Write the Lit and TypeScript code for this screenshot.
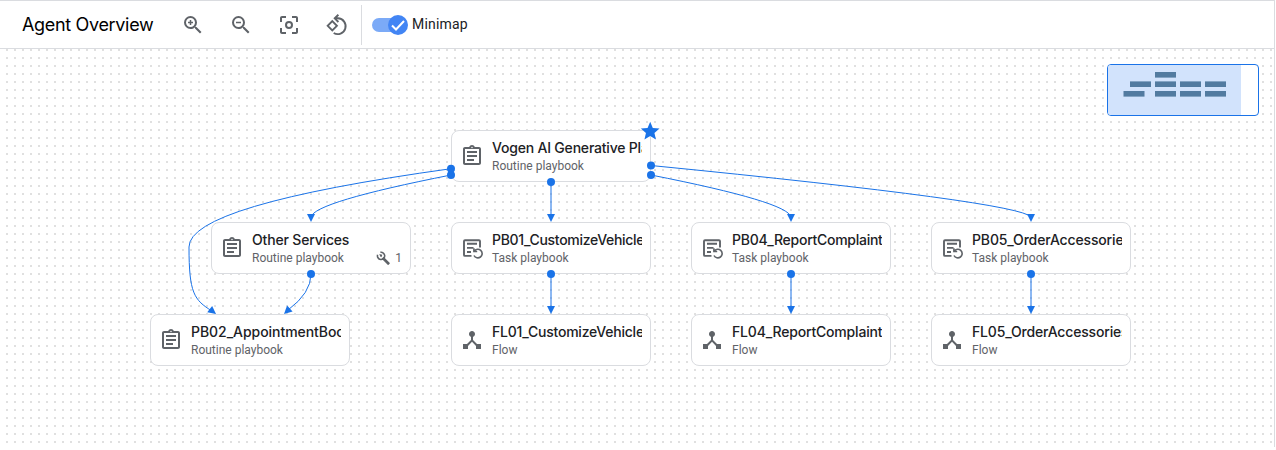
import { LitElement, html, svg, css } from "lit";
import { customElement, property } from "lit/decorators.js";

type Kind = "routine" | "task" | "flow";
interface GraphNode {
  x: number;
  y: number;
  title: string;
  kind: Kind;
  tracking: number;
  start?: boolean;
  tools?: number;
}

const SUBTITLES: Record<Kind, string> = {
  routine: "Routine playbook",
  task: "Task playbook",
  flow: "Flow",
};

const NODES: GraphNode[] = [
  { x: 451, y: 81, title: "Vogen AI Generative Playbook", kind: "routine", tracking: -0.2, start: true },
  { x: 211, y: 173, title: "Other Services", kind: "routine", tracking: -0.17, tools: 1 },
  { x: 451, y: 173, title: "PB01_CustomizeVehicle", kind: "task", tracking: -0.3 },
  { x: 691, y: 173, title: "PB04_ReportComplaint", kind: "task", tracking: -0.27 },
  { x: 931, y: 173, title: "PB05_OrderAccessories", kind: "task", tracking: -0.15 },
  { x: 150, y: 265, title: "PB02_AppointmentBooking", kind: "routine", tracking: -0.05 },
  { x: 451, y: 265, title: "FL01_CustomizeVehicle", kind: "flow", tracking: -0.22 },
  { x: 691, y: 265, title: "FL04_ReportComplaint", kind: "flow", tracking: -0.18 },
  { x: 931, y: 265, title: "FL05_OrderAccessories", kind: "flow", tracking: -0.17 },
];

// Canvas coordinates: path, source port and arrow tip with its rotation.
const EDGES = [
  { d: "M451 119.7Q189 156 189 198C189 244 194 251 212 262", from: [451, 119.7], to: [216, 265], turn: -52 },
  { d: "M451 126Q314 153 311 168", from: [451, 126], to: [311, 173], turn: 0 },
  { d: "M551 133V168", from: [551, 133], to: [551, 173], turn: 0 },
  { d: "M651 126Q788 153 791 168", from: [651, 126], to: [791, 173], turn: 0 },
  { d: "M651 116.5Q1020 153 1031 168", from: [651, 116.5], to: [1031, 173], turn: 0 },
  { d: "M311 225Q311 244 288 261", from: [311, 225], to: [284, 265], turn: 47 },
  { d: "M551 225V260", from: [551, 225], to: [551, 265], turn: 0 },
  { d: "M791 225V260", from: [791, 225], to: [791, 265], turn: 0 },
  { d: "M1031 225V260", from: [1031, 225], to: [1031, 265], turn: 0 },
];

const MAP_BLOCKS = [
  [47, 7], [22, 16.4], [47, 16.4], [72, 16.4], [97, 16.4],
  [15.5, 26], [47, 26], [72, 26], [97, 26],
];

const ICONS = {
  routine: svg`<path d="M7 15h7v2H7zm0-4h10v2H7zm0-4h10v2H7zm12-4h-4.18C14.4 1.84 13.3 1 12 1s-2.4.84-2.82 2H5c-1.1 0-2 .9-2 2v14c0 1.1.9 2 2 2h14c1.1 0 2-.9 2-2V5c0-1.1-.9-2-2-2zm-7-.25c.41 0 .75.34.75.75s-.34.75-.75.75-.75-.34-.75-.75.34-.75.75-.75zM19 19H5V5h14v14z"/>`,
  task: svg`<g fill="none" stroke="currentColor" stroke-width="1.9"><path d="M11.5 19.9H5a1 1 0 0 1-1-1V5.2a1 1 0 0 1 1-1h14a1 1 0 0 1 1 1v6.3M7 7.8h10M7 11.9h6.5M7 16h4"/><path stroke-width="1.6" d="M13.9 12.2v3.3h3.3M14.2 15.3a4.3 4.3 0 1 1-.2 4.2"/></g>`,
  flow: svg`<path d="M17 16l-4-4V8.82C14.16 8.4 15 7.3 15 6c0-1.66-1.34-3-3-3S9 4.34 9 6c0 1.3.84 2.4 2 2.82V12l-4 4H3v5h5v-3.05l4-4.2 4 4.2V21h5v-5h-4z"/>`,
  zoomIn: svg`<path d="M15.5 14h-.79l-.28-.27A6.47 6.47 0 0 0 16 9.5 6.5 6.5 0 1 0 9.5 16c1.61 0 3.09-.59 4.23-1.57l.27.28v.79l5 4.99L20.49 19l-4.99-5zm-6 0C7.01 14 5 11.99 5 9.5S7.01 5 9.5 5 14 7.01 14 9.5 11.99 14 9.5 14zm.75-7h-1.5v1.75H7v1.5h1.75V12h1.5v-1.75H12v-1.5h-1.75z"/>`,
  zoomOut: svg`<path d="M15.5 14h-.79l-.28-.27A6.47 6.47 0 0 0 16 9.5 6.5 6.5 0 1 0 9.5 16c1.61 0 3.09-.59 4.23-1.57l.27.28v.79l5 4.99L20.49 19l-4.99-5zm-6 0C7.01 14 5 11.99 5 9.5S7.01 5 9.5 5 14 7.01 14 9.5 11.99 14 9.5 14zM7 8.75h5v1.5H7z"/>`,
  center: svg`<path d="M5 15H3v4c0 1.1.9 2 2 2h4v-2H5v-4zM5 5h4V3H5c-1.1 0-2 .9-2 2v4h2V5zm14-2h-4v2h4v4h2V5c0-1.1-.9-2-2-2zm0 16h-4v2h4c1.1 0 2-.9 2-2v-4h-2v4z"/><circle cx="12" cy="12" r="3" fill="none" stroke="currentColor" stroke-width="2"/>`,
  reset: svg`<g fill="none" stroke="currentColor" stroke-width="1.9"><path d="M7.3 8.2l4.6 4.6-4.6 4.6-4.6-4.6z"/><path d="M13.4 1.7L9.7 5.3l3.7 3.7M10 5.3h3a7.9 7.9 0 1 1-4.3 14.7"/></g>`,
  wrench: svg`<path fill="none" stroke="currentColor" stroke-width="2.6" d="M2.7 6.2A6 6 0 1 0 7.2 2.2"/><path d="M5.500 5l5 1.200-1.500 4-2-1zM12.500 9.500L22.500 19.500c.5.500.5 1 0 1.500l-1.700 1.700c-.5.500-1 .5-1.500 0L9.500 13z"/>`,
  star: svg`<path d="M12 17.27L18.18 21l-1.64-7.03L22 9.24l-7.19-.61L12 2 9.19 8.63 2 9.24l5.46 4.73L5.82 21z"/>`,
};

@customElement("ui-icon")
class UiIcon extends LitElement {
  @property() name: keyof typeof ICONS = "routine";
  static styles = css`
    :host { display: block; width: 24px; height: 24px; flex: none; }
    .glyph { display: block; width: 100%; height: 100%; fill: currentColor; }
  `;
  render() {
    return html`<svg class="glyph" viewBox="0 0 24 24">${ICONS[this.name]}</svg>`;
  }
}

@customElement("graph-card")
class GraphCard extends LitElement {
  @property({ attribute: false }) node!: GraphNode;
  static styles = css`
    :host { display: block; position: absolute; width: 200px; height: 52px; }
    .card {
      box-sizing: border-box; height: 100%; display: flex; align-items: center; gap: 8px;
      padding: 0 8px; background: #fff; border: 1px solid #dadce0; border-radius: 8px;
      color: #5f6368; font: 12px/16px Roboto, sans-serif;
    }
    .body { flex: 1; min-width: 0; height: 36px; }
    .title {
      overflow: hidden; white-space: nowrap; height: 20px;
      font: 500 14px/20px "Google Sans", Inter, sans-serif; color: #202124;
    }
    .row { display: flex; justify-content: space-between; height: 16px; }
    .tools { display: flex; align-items: center; gap: 5px; }
    .wrench { width: 14.5px; height: 14.5px; }
    .star { position: absolute; left: 188px; top: -10px; width: 22.4px; height: 22.4px; color: #1a73e8; }
  `;
  render() {
    const n = this.node;
    return html`
      <div class="card">
        <ui-icon name=${n.kind}></ui-icon>
        <div class="body">
          <div class="title" style="letter-spacing:${n.tracking}px">${n.title}</div>
          <div class="row">
            <span>${SUBTITLES[n.kind]}</span>
            ${n.tools ? html`<span class="tools"><ui-icon class="wrench" name="wrench"></ui-icon>${n.tools}</span>` : ""}
          </div>
        </div>
      </div>
      ${n.start ? html`<ui-icon class="star" name="star"></ui-icon>` : ""}
    `;
  }
}

@customElement("app-root")
class AppRoot extends LitElement {
  static styles = css`
    :host { display: block; width: 1276px; height: 450px; background: #fff; overflow: hidden; font-family: Roboto, sans-serif; }
    .panel { box-sizing: border-box; width: 1275px; height: 447px; display: flex; flex-direction: column; border-top: 1px solid #dadce0; border-right: 1px solid #dadce0; }
    .bar { box-sizing: border-box; height: 48px; flex: none; display: flex; align-items: center; border-bottom: 1px solid #dadce0; padding-left: 22px; color: #5f6368; }
    .heading { width: 159px; font: 400 18px/24px "Google Sans", Inter, sans-serif; letter-spacing: -0.33px; color: #000; white-space: nowrap; }
    .actions { display: flex; gap: 24px; }
    .rule { width: 1px; height: 40px; margin: 0 10px 0 12px; background: #dadce0; }
    .switch { width: 36px; height: 20px; flex: none; }
    .label { margin-left: 4px; padding-bottom: 2px; font-size: 14px; line-height: 20px; letter-spacing: 0.2px; color: #202124; }
    .canvas {
      position: relative; flex: 1; overflow: hidden;
      background: conic-gradient(from 270deg at 2px 2px, #e0e0e0 90deg, transparent 0) 6px 0 / 8px 8px;
    }
    .edges { position: absolute; inset: 0; width: 100%; height: 100%; overflow: visible; pointer-events: none; }
    .line { fill: none; stroke: #1a73e8; stroke-width: 1; }
    .mark { fill: #1a73e8; }
    .minimap { position: absolute; left: 1107px; top: 15px; width: 152px; height: 52px; box-sizing: border-box; border: 1px solid #1a73e8; border-radius: 4px; background: #fff; overflow: hidden; }
    .map { display: block; width: 150px; height: 50px; }
  `;
  render() {
    return html`
      <div class="panel">
        <div class="bar">
          <div class="heading">Agent Overview</div>
          <div class="actions">
            <ui-icon name="zoomIn"></ui-icon>
            <ui-icon name="zoomOut"></ui-icon>
            <ui-icon name="center"></ui-icon>
            <ui-icon name="reset"></ui-icon>
          </div>
          <div class="rule"></div>
          <svg class="switch" viewBox="0 0 36 20">
            <rect y="3" width="32" height="14" rx="7" fill="#7baaf7" />
            <circle cx="26" cy="10" r="10" fill="#4285f4" />
            <path d="M20 10.5l4 4 8-8.5" fill="none" stroke="#fff" stroke-width="2" />
          </svg>
          <span class="label">Minimap</span>
        </div>
        <div class="canvas">
          ${NODES.map((n) => html`<graph-card .node=${n} style="left:${n.x}px;top:${n.y}px"></graph-card>`)}
          <svg class="edges">
            ${EDGES.map((e) => svg`
              <path class="line" d=${e.d} />
              <circle class="mark" cx=${e.from[0]} cy=${e.from[1]} r="4" />
              <path class="mark" d="M0 0L-4 -8H4Z" transform="translate(${e.to[0]} ${e.to[1]}) rotate(${e.turn})" />`)}
          </svg>
          <div class="minimap">
            <svg class="map" viewBox="0 0 150 50">
              <rect width="133" height="50" fill="#d2e3fc" />
              ${MAP_BLOCKS.map(([x, y]) => svg`<rect x=${x} y=${y} width="21" height="5.6" fill="#527ba0" />`)}
            </svg>
          </div>
        </div>
      </div>
    `;
  }
}
